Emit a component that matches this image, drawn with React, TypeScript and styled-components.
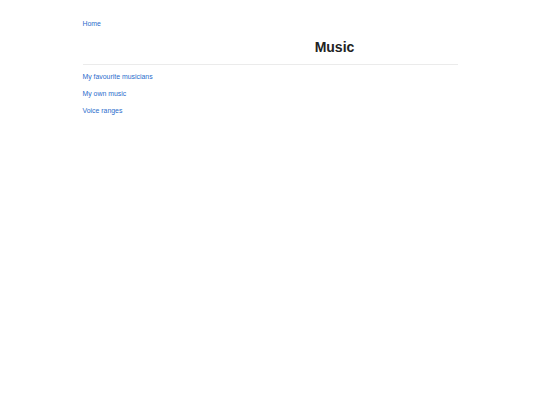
import styled, { createGlobalStyle } from 'styled-components';

const Global = createGlobalStyle`
  body {
    margin: 0;
    background: #fff;
    font-family: "Liberation Sans", Arial, sans-serif;
  }
`;

const Page = styled.div`
  width: 375px;
  margin: 0 auto;
  padding-top: 19px;
`;

const Link = styled.a`
  display: block;
  color: #2a6ccc;
  font-size: 6.9px;
  line-height: 10px;
  text-decoration: none;
`;

const Header = styled.header`
  display: grid;
  grid-template-columns: 129px 1fr;
  padding-top: 8px;
  padding-bottom: 7px;
  border-bottom: 1px solid #ebebeb;
`;

const Title = styled.h1`
  grid-column: 2;
  margin: 0;
  text-align: center;
  font-size: 14px;
  line-height: 20px;
  font-weight: bold;
  color: #222;
`;

const LinkList = styled.nav`
  display: flex;
  flex-direction: column;
  gap: 7px;
  padding-top: 7px;
`;

export default function App() {
  return (
    <>
      <Global />
      <Page>
        <Link href="#">Home</Link>
        <Header>
          <Title>Music</Title>
        </Header>
        <LinkList>
          <Link href="#">My favourite musicians</Link>
          <Link href="#">My own music</Link>
          <Link href="#">Voice ranges</Link>
        </LinkList>
      </Page>
    </>
  );
}
